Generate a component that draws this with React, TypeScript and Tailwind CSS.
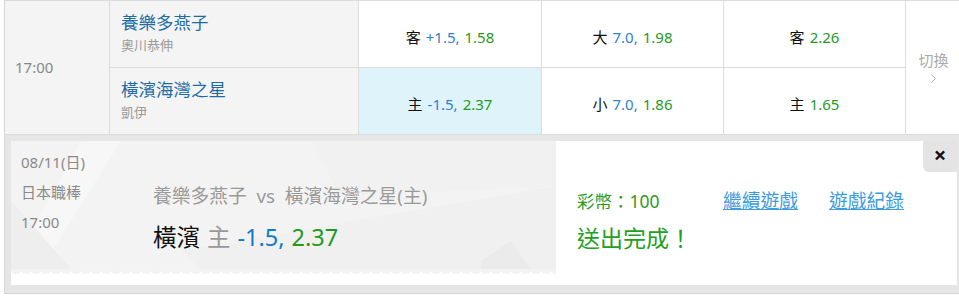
import { ChevronRight } from "lucide-react";

const font = "font-['Noto_Sans','Noto_Sans_CJK_TC',sans-serif]";

function Odds({ label, line, price, active }: { label: string; line?: string; price: string; active?: boolean }) {
    return (
        <div className={`flex items-center justify-center pt-[6px] text-[15px] ${active ? "bg-[#dff3fb]" : "bg-white"}`}>
            <span className="text-[#111]">{label}</span>
            {line && <span className="ml-[5px] text-[#2f7fd2]">{line}</span>}
            <span className="ml-[5px] text-[#259a25]">{price}</span>
        </div>
    );
}

function Team({ name, pitcher }: { name: string; pitcher: string }) {
    return (
        <div className="w-[249px] border-r border-[#dcdcdc] bg-[#f4f4f4] pl-[11px] pt-[10px]">
            <div className="text-[17.5px] leading-[22px] text-[#1f6ca4]">{name}</div>
            <div className="mt-[3px] text-[13px] leading-[18px] text-[#9a9a9a]">{pitcher}</div>
        </div>
    );
}

export default function App() {
    return (
        <div className={`w-[959px] h-[306px] overflow-hidden bg-white ${font}`}>
            <div className="ml-[4px] border-l border-[#d6d6d6]">
                {/* Game row */}
                <div className="flex border-t border-b border-[#dcdcdc]">
                    <div className="w-[105px] border-r border-[#dcdcdc] bg-[#f4f4f4] flex items-center pl-[10px] text-[15px] text-[#888]">
                        17:00
                    </div>
                    <div className="flex flex-col">
                        <div className="flex h-[66px] border-b border-[#dcdcdc] box-content">
                            <Team name="養樂多燕子" pitcher="奧川恭伸" />
                            <div className="w-[183px] border-r border-[#dcdcdc] grid">
                                <Odds label="客" line="+1.5," price="1.58" />
                            </div>
                            <div className="w-[182px] border-r border-[#dcdcdc] grid">
                                <Odds label="大" line="7.0," price="1.98" />
                            </div>
                            <div className="w-[182px] border-r border-[#dcdcdc] grid">
                                <Odds label="客" price="2.26" />
                            </div>
                        </div>
                        <div className="flex h-[66px]">
                            <Team name="橫濱海灣之星" pitcher="凱伊" />
                            <div className="w-[183px] border-r border-[#dcdcdc] grid">
                                <Odds label="主" line="-1.5," price="2.37" active />
                            </div>
                            <div className="w-[182px] border-r border-[#dcdcdc] grid">
                                <Odds label="小" line="7.0," price="1.86" />
                            </div>
                            <div className="w-[182px] border-r border-[#dcdcdc] grid">
                                <Odds label="主" price="1.65" />
                            </div>
                        </div>
                    </div>
                    <div className="flex-1 bg-white flex flex-col items-center justify-center pl-[2px]">
                        <span className="text-[15px] leading-[20px] text-[#aaa]">切換</span>
                        <ChevronRight size={15} strokeWidth={1.5} className="mt-[1px] text-[#aaa]" />
                    </div>
                </div>

                {/* Bet confirmation */}
                <div className="bg-[#e6e6e6] pl-[6px] pr-[2px] pt-[6px] pb-[8px] border-b border-[#d2d2d2]">
                    <div className="relative flex h-[144px] bg-white">
                        <div className="relative w-[545px] flex flex-col">
                            <div className="relative h-[128px] bg-[#f3f3f3] overflow-hidden">
                                <svg className="absolute inset-0" width="545" height="128" viewBox="0 0 545 128">
                                    <polygon points="0,128 30,128 110,0 70,0" fill="#f7f7f7" />
                                    <polygon points="170,110 545,45 545,128 190,128" fill="#f0f0f0" />
                                    <polygon points="300,0 545,0 545,45 330,55" fill="#f1f1f1" />
                                    <polygon points="0,60 60,128 0,128" fill="#eeeeee" />
                                    <polygon points="470,120 500,100 520,128 470,128" fill="#ebebeb" />
                                </svg>
                                <div className="relative flex">
                                    <div className="w-[142px] pl-[10px] pt-[6px] text-[15px] leading-[30px] text-[#8a8a8a]">
                                        <div>08/11(日)</div>
                                        <div>日本職棒</div>
                                        <div>17:00</div>
                                    </div>
                                    <div className="pt-[43px]">
                                        <div className="text-[18.75px] leading-[24px] text-[#9a9a9a]">
                                            養樂多燕子 &nbsp;vs&nbsp; 橫濱海灣之星(主)
                                        </div>
                                        <div className="mt-[14px] text-[23.5px] leading-[30px]">
                                            <span className="text-[#111]">橫濱</span>
                                            <span className="ml-[7px] text-[#999]">主</span>
                                            <span className="ml-[7px] text-[#0f7bc8]">-1.5,</span>
                                            <span className="ml-[7px] text-[#1f9a1f]">2.37</span>
                                        </div>
                                    </div>
                                </div>
                            </div>
                            <div className="h-[6px] bg-[radial-gradient(circle_at_5px_0,#f3f3f3_5px,transparent_5.5px)] bg-[length:10px_6px] bg-repeat-x" />
                        </div>
                        <div className="flex-1 pl-[21px] pt-[48px]">
                            <div className="flex items-center">
                                <div className="w-[146px] text-[17.5px] leading-[24px] text-[#2f9a1f]">彩幣：100</div>
                                <a href="#" className="text-[18.75px] leading-[24px] text-[#3d9be0] underline">繼續遊戲</a>
                                <a href="#" className="ml-[31px] text-[18.75px] leading-[24px] text-[#3d9be0] underline">遊戲紀錄</a>
                            </div>
                            <div className="mt-[10px] text-[23px] leading-[30px] text-[#23a023]">送出完成！</div>
                        </div>
                        <button className="absolute top-0 right-0 w-[34px] h-[31px] bg-[#e4e4e4] rounded-bl-[6px] flex items-center justify-center pb-[6px] text-[22px] leading-none font-bold text-[#111]">
                            ×
                        </button>
                    </div>
                </div>
            </div>
        </div>
    );
}
